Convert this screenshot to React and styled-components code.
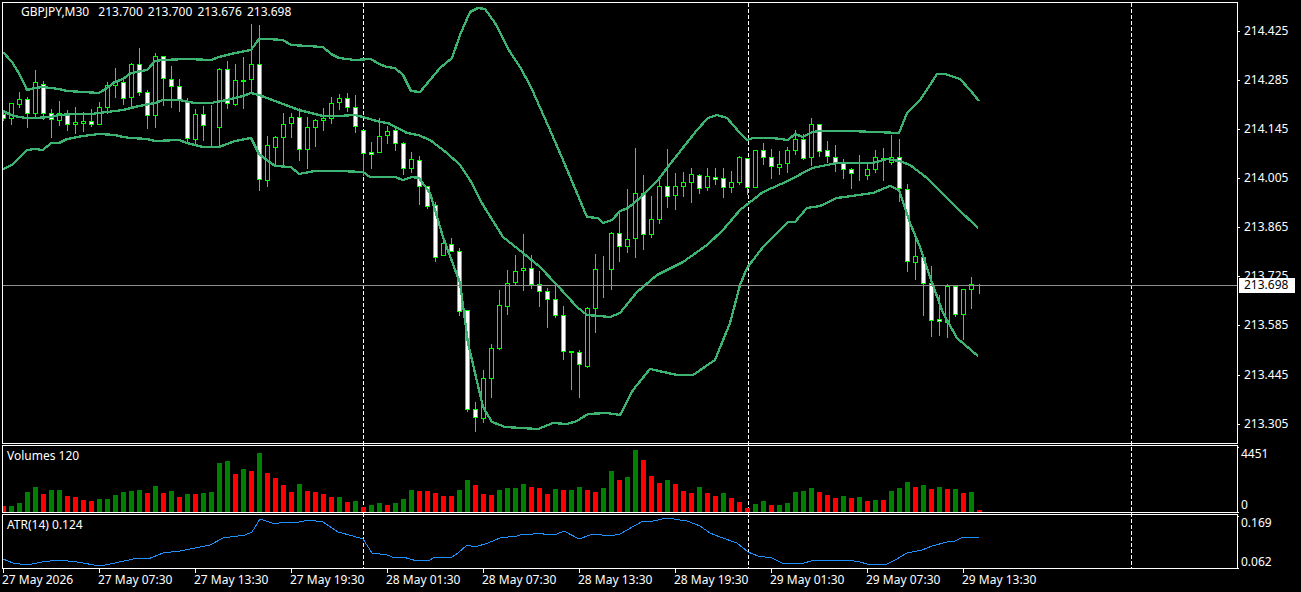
import React from "react";
import styled, { createGlobalStyle } from "styled-components";

// [high, body top, body bottom, low, white body]
const candles = [
  [110,114,118,120,1],[103,103,118,124,0],[92,99,104,107,0],[97,99,113,127,1],[70,82,113,118,0],[81,84,113,119,1],
  [109,113,119,137,1],[101,113,120,125,0],[110,113,124,130,1],[107,122,124,133,0],[112,121,123,131,0],[109,121,124,126,1],
  [102,107,124,124,0],[82,85,107,113,0],[68,81,85,97,0],[78,82,98,104,1],[63,64,97,107,0],[48,64,92,95,1],
  [90,92,115,128,1],[53,56,115,127,0],[56,56,78,105,1],[66,79,86,107,1],[79,86,100,111,1],[98,102,138,141,1],
  [109,114,139,144,0],[106,114,125,140,1],[105,125,125,147,0],[68,69,127,147,0],[61,69,103,108,1],[64,80,104,105,0],
  [57,80,81,108,1],[24,64,79,93,0],[25,64,179,190,1],[136,145,180,186,0],[136,137,147,165,0],[113,124,137,166,0],
  [113,117,123,137,0],[108,117,149,160,1],[117,127,149,168,0],[119,120,127,146,0],[108,118,120,130,0],[97,103,118,123,0],
  [94,98,102,109,0],[93,98,107,111,1],[95,107,126,132,1],[130,130,153,175,1],[142,152,154,168,1],[118,136,152,152,0],
  [126,131,135,143,0],[126,130,143,150,1],[142,143,168,174,1],[152,159,168,172,0],[156,160,186,204,1],[186,186,206,208,1],
  [202,205,257,261,1],[237,243,255,255,0],[238,244,251,251,1],[248,251,311,315,1],[310,310,409,411,1],[402,409,417,431,1],
  [370,378,418,422,0],[344,348,378,397,0],[290,305,348,349,0],[270,283,306,314,0],[255,271,282,285,0],[234,268,270,290,0],
  [255,268,284,288,1],[271,284,291,306,1],[288,291,299,327,1],[283,299,315,317,1],[306,315,351,359,1],[351,351,352,389,1],
  [350,352,364,397,1],[307,308,366,367,0],[254,269,308,332,0],[256,270,270,297,0],[232,233,269,289,0],[213,233,246,261,1],
  [189,239,246,252,0],[148,193,238,257,0],[175,193,234,249,1],[196,219,234,237,0],[178,186,219,223,0],[149,186,196,207,1],
  [173,186,195,209,0],[172,182,186,196,0],[168,174,182,202,0],[174,175,188,193,1],[168,176,187,190,0],[168,177,179,184,1],
  [168,178,187,197,1],[171,182,187,192,0],[156,157,182,184,0],[158,158,187,194,1],[150,150,187,187,0],[143,150,157,164,1],
  [149,157,166,178,1],[151,164,167,174,0],[147,150,163,172,0],[130,139,150,154,0],[134,139,158,159,1],[118,124,157,165,0],
  [124,124,151,156,1],[141,150,156,162,1],[145,157,162,171,1],[159,162,169,178,1],[168,169,173,188,1],[155,174,174,180,0],
  [163,169,175,179,0],[150,157,169,172,0],[148,158,160,180,1],[135,157,162,164,0],[139,157,188,201,1],[184,189,261,271,1],
  [235,256,262,279,0],[257,257,283,315,1],[266,283,320,336,1],[295,319,321,335,1],[284,286,322,337,0],[286,286,314,316,1],
  [289,289,314,339,0],[277,284,289,308,0],[284,284,284,293,0],
];

const upperBand = "3,52 12,62 20,75 27,90 35,88 43,87 51,88 59,89 67,91 83,92 99,93 107,88 115,82 123,79 131,73 147,70 155,61 163,60 187,59 211,60 219,57 235,53 251,50 259,39 267,39 283,40 291,45 307,46 323,47 331,54 339,58 355,60 371,59 379,64 387,67 395,68 403,75 411,91 420,92 430,80 440,68 452,58 460,35 470,12 478,8 485,9 495,23 510,52 520,67 530,85 550,130 563,160 587,217 598,218 603,223 612,220 620,211 628,208 640,198 658,180 667,168 697,130 708,118 717,115 727,118 740,133 747,140 753,138 773,138 780,139 788,140 795,134 803,137 812,132 820,131 850,131 875,132 899,133 907,113 920,100 928,88 937,74 945,74 960,79 970,90 979,101";
const middleBand = "3,111 11,115 19,117 27,118 35,118 51,117 59,115 75,114 91,114 107,112 123,110 139,106 155,103 163,100 179,100 195,103 211,103 227,100 243,96 251,93 259,95 275,101 283,104 299,110 315,114 323,116 339,116 355,115 363,117 380,122 388,123 407,133 418,135 430,140 447,153 460,165 470,180 483,205 503,237 523,253 540,267 557,285 577,307 587,315 610,317 620,313 637,292 657,275 683,262 707,245 723,230 740,210 763,192 790,180 812,168 837,163 873,163 887,159 899,161 910,165 927,178 947,198 957,208 978,228";
const lowerBand = "3,169 12,165 27,150 35,149 43,150 51,143 59,143 67,139 83,136 99,134 115,135 123,137 131,138 147,139 155,141 179,140 187,143 203,147 219,147 235,141 251,138 259,154 275,166 291,167 299,174 315,171 339,171 363,172 370,177 395,177 403,180 412,177 419,178 430,193 443,237 460,283 468,343 483,407 492,422 505,427 538,429 553,423 567,424 577,421 588,414 607,413 620,415 633,390 650,369 677,375 693,375 715,360 730,323 740,285 747,268 763,247 788,222 795,222 807,208 820,206 837,198 873,193 890,186 899,190 910,223 920,247 930,277 943,313 957,338 978,356";

// [body top, green]
const volumes = [
  [506,0],[506,1],[503,1],[492,1],[487,1],[494,0],[490,1],[490,1],[496,0],[497,0],[500,0],[501,0],[499,1],[499,1],[495,1],[492,1],
  [491,1],[490,1],[493,0],[486,1],[493,0],[491,1],[497,0],[494,1],[494,0],[493,1],[492,1],[463,1],[461,1],[474,0],[469,1],[471,0],
  [453,1],[473,0],[478,0],[485,0],[492,0],[484,1],[491,0],[492,0],[494,0],[497,0],[497,1],[502,0],[501,1],[507,0],[505,1],[503,1],
  [505,0],[503,1],[499,1],[490,1],[491,0],[491,0],[493,0],[496,0],[496,0],[490,1],[480,1],[485,0],[494,0],[495,0],[490,1],[488,1],
  [488,1],[484,1],[487,0],[488,0],[494,0],[489,1],[490,0],[490,1],[487,1],[490,0],[492,0],[488,1],[471,1],[480,0],[477,1],[450,1],
  [460,0],[476,0],[483,0],[480,1],[484,0],[491,0],[493,0],[487,1],[493,0],[496,0],[493,1],[498,0],[502,0],[508,0],[504,1],[501,1],
  [505,0],[505,1],[503,1],[492,1],[491,1],[488,1],[492,0],[495,0],[498,0],[496,1],[498,0],[497,1],[501,0],[500,1],[500,0],[491,1],
  [488,1],[482,1],[487,0],[485,1],[489,0],[487,1],[489,0],[489,1],[493,0],[492,1],[510,0],
];

const atr = "3,559 13,563 27,565 42,562 58,560 77,562 100,566 110,564 138,558 148,559 163,553 180,551 210,545 223,538 245,535 252,532 260,519 275,524 283,522 295,523 308,520 323,522 338,532 353,536 363,539 372,553 387,555 395,558 403,557 417,561 430,560 435,557 452,557 458,553 467,545 475,547 488,543 500,538 517,536 523,534 533,534 540,533 547,535 557,534 564,531 579,539 593,534 610,536 620,534 643,521 653,521 667,518 687,521 700,526 710,533 720,537 737,543 748,552 758,556 772,558 782,563 800,564 815,560 847,560 860,562 867,564 887,564 895,560 907,553 922,550 932,546 947,542 955,541 963,537 975,537 979,538";

const prices = ["214.425", "214.285", "214.145", "214.005", "213.865", "213.725", "213.585", "213.445", "213.305"];
const times = ["27 May 2026", "27 May 07:30", "27 May 13:30", "27 May 19:30", "28 May 01:30", "28 May 07:30", "28 May 13:30", "28 May 19:30", "29 May 01:30", "29 May 07:30", "29 May 13:30"];
const periodLines = [363, 748, 1131];

const barX = (i) => 3 + 8 * i;

const GlobalStyle = createGlobalStyle`
  html, body {
    margin: 0;
    background: #000;
    overflow: hidden;
  }
`;

const Terminal = styled.div`
  position: relative;
  width: 1301px;
  height: 592px;
  box-sizing: border-box;
  padding: 2px 0 0 2px;
  display: grid;
  grid-template-columns: 1236px 63px;
  grid-template-rows: 442px 68px 55px 1fr;
  row-gap: 1px;
  background: #000;
  color: #fff;
  font-family: "Noto Sans", "DejaVu Sans", sans-serif;
  font-size: 12px;
  line-height: 14px;
`;

const PeriodGrid = styled.svg`
  position: absolute;
  left: 0;
  top: 0;
  width: 1301px;
  height: 592px;
`;

const PeriodLine = styled.line`
  stroke: #fff;
  stroke-width: 1;
  stroke-dasharray: 4 2;
  shape-rendering: crispEdges;
`;

const Pane = styled.div`
  position: relative;
  box-sizing: border-box;
  border: 1px solid #fff;
`;

const Plot = styled.svg`
  display: block;
  width: 100%;
  height: 100%;
  overflow: hidden;
`;

const Caption = styled.span`
  position: absolute;
  left: ${(p) => p.$left}px;
  top: ${(p) => p.$top}px;
  white-space: pre;
  word-spacing: ${(p) => p.$wordSpacing || 0}px;
`;

const Symbol = styled.span`
  margin-right: 4px;
`;

const Wick = styled.line`
  stroke: #00ff00;
  stroke-width: 1;
  shape-rendering: crispEdges;
`;

const CandleBody = styled.rect`
  stroke: #00ff00;
  stroke-width: 1;
  fill: ${(p) => (p.$white ? "#fff" : "#000")};
  shape-rendering: crispEdges;
`;

const Band = styled.polyline`
  fill: none;
  stroke: #3cb371;
  stroke-width: 2.3;
  shape-rendering: crispEdges;
`;

const PriceLine = styled.line`
  stroke: #8f8f8f;
  stroke-width: 1;
  shape-rendering: crispEdges;
`;

const VolumeBar = styled.rect`
  fill: ${(p) => (p.$up ? "#008000" : "#ff0000")};
  shape-rendering: crispEdges;
`;

const AtrLine = styled.polyline`
  fill: none;
  stroke: #1e90ff;
  stroke-width: 1;
  shape-rendering: crispEdges;
`;

const PriceAxis = styled.div`
  position: relative;
  padding-top: 4px;
  display: flex;
  flex-direction: column;
`;

const PriceRow = styled.div`
  position: relative;
  flex: 0 0 49.15px;
  padding-left: 6px;
  display: flex;
  align-items: center;

  &::before {
    content: "";
    position: absolute;
    left: 0;
    top: 50%;
    width: 2px;
    height: 1px;
    background: #fff;
  }
`;

const CurrentPrice = styled.div`
  position: absolute;
  left: 1px;
  top: 276px;
  width: 56px;
  height: 15px;
  box-sizing: border-box;
  padding-left: 5px;
  background: #fff;
  color: #000;
`;

const SideAxis = styled.div`
  position: relative;
  box-sizing: border-box;
  padding: ${(p) => p.$padding};
  display: flex;
  flex-direction: column;
  justify-content: space-between;

  &::before,
  &::after {
    content: "";
    position: absolute;
    left: 0;
    width: 1px;
    height: 1px;
    background: #fff;
  }
  &::before {
    top: 2px;
  }
  &::after {
    bottom: 0;
  }
`;

const TimeAxis = styled.div`
  grid-column: 1 / -1;
  display: flex;
  margin-top: -1px;
`;

const TimeLabel = styled.div`
  position: relative;
  flex: 0 0 96px;
  padding-top: 4px;
  white-space: nowrap;

  &::before {
    content: "";
    position: absolute;
    left: 1px;
    top: 0;
    width: 1px;
    height: 4px;
    background: #fff;
  }
`;

const App = () => {
  return (
    <Terminal>
      <GlobalStyle />
      <PeriodGrid>
        {periodLines.map((x) => (
          <PeriodLine key={x} x1={x + 0.5} x2={x + 0.5} y1={3} y2={568} />
        ))}
      </PeriodGrid>

      <Pane>
        <Plot viewBox="3 3 1234 440">
          {candles.map(([high, top, bottom, low, white], i) => (
            <g key={i}>
              <Wick x1={barX(i) + 0.5} x2={barX(i) + 0.5} y1={high} y2={low + 1} />
              <CandleBody x={barX(i) - 1.5} y={top + 0.5} width={4} height={bottom - top} $white={white} />
            </g>
          ))}
          <Band points={upperBand} />
          <Band points={middleBand} />
          <Band points={lowerBand} />
          <PriceLine x1={3} x2={1237} y1={285.5} y2={285.5} />
        </Plot>
        <Caption $left={18} $top={2} $wordSpacing={2}>
          <Symbol>GBPJPY,M30</Symbol> 213.700 213.700 213.676 213.698
        </Caption>
      </Pane>
      <PriceAxis>
        {prices.map((price) => (
          <PriceRow key={price}>{price}</PriceRow>
        ))}
        <CurrentPrice>213.698</CurrentPrice>
      </PriceAxis>

      <Pane>
        <Plot viewBox="3 446 1234 66">
          {volumes.map(([top, up], i) => (
            <VolumeBar key={i} x={barX(i) - 2} y={top} width={5} height={512 - top} $up={up} />
          ))}
        </Plot>
        <Caption $left={4} $top={3}>Volumes 120</Caption>
      </Pane>
      <SideAxis $padding="2px 0 1px 3px">
        <span>4451</span>
        <span>0</span>
      </SideAxis>

      <Pane>
        <Plot viewBox="3 515 1234 53">
          <AtrLine points={atr} />
        </Plot>
        <Caption $left={4} $top={3}>ATR(14) 0.124</Caption>
      </Pane>
      <SideAxis $padding="2px 0 0 3px">
        <span>0.169</span>
        <span>0.062</span>
      </SideAxis>

      <TimeAxis>
        {times.map((time) => (
          <TimeLabel key={time}>{time}</TimeLabel>
        ))}
      </TimeAxis>
    </Terminal>
  );
};

export default App;
